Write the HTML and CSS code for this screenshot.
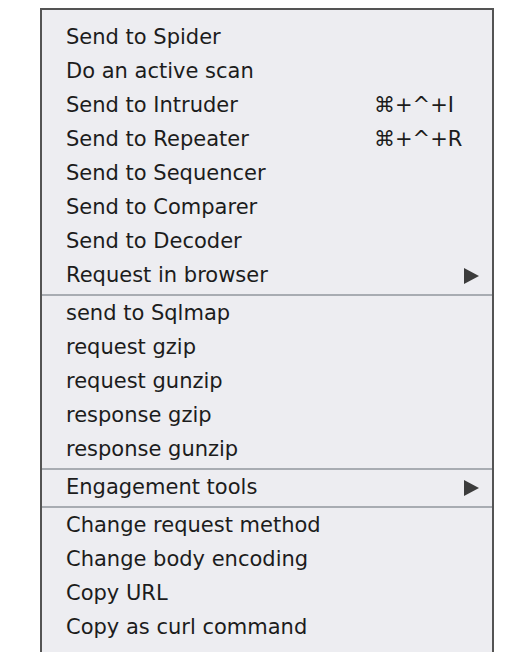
FILE: index.html
```html
<!DOCTYPE html>
<html>
<head>
<meta charset="utf-8">
<link rel="stylesheet" href="styles.css">
</head>
<body>
<div class="menu">
  <div class="item"><span class="label">Send to Spider</span></div>
  <div class="item"><span class="label">Do an active scan</span></div>
  <div class="item"><span class="label">Send to Intruder</span><span class="shortcut">⌘+^+I</span></div>
  <div class="item"><span class="label">Send to Repeater</span><span class="shortcut">⌘+^+R</span></div>
  <div class="item"><span class="label">Send to Sequencer</span></div>
  <div class="item"><span class="label">Send to Comparer</span></div>
  <div class="item"><span class="label">Send to Decoder</span></div>
  <div class="item"><span class="label">Request in browser</span><svg class="arrow" width="15" height="16" viewBox="0 0 15 16"><polygon points="0,0 15,8 0,16"/></svg></div>
  <div class="sep"></div>
  <div class="item"><span class="label">send to Sqlmap</span></div>
  <div class="item"><span class="label">request gzip</span></div>
  <div class="item"><span class="label">request gunzip</span></div>
  <div class="item"><span class="label">response gzip</span></div>
  <div class="item"><span class="label">response gunzip</span></div>
  <div class="sep"></div>
  <div class="item"><span class="label">Engagement tools</span><svg class="arrow" width="15" height="16" viewBox="0 0 15 16"><polygon points="0,0 15,8 0,16"/></svg></div>
  <div class="sep"></div>
  <div class="item"><span class="label">Change request method</span></div>
  <div class="item"><span class="label">Change body encoding</span></div>
  <div class="item"><span class="label">Copy URL</span></div>
  <div class="item"><span class="label">Copy as curl command</span></div>
  <div class="item"><span class="label">Copy to file</span></div>
</div>
</body>
</html>
```

FILE: styles.css
```css
html, body {
  margin: 0;
  padding: 0;
  background: #ffffff;
  overflow: hidden;
  height: 652px;
}

.menu {
  margin: 8px 0 0 40px;
  width: 450px;
  height: 700px;
  border: 2px solid #545454;
  background: #ededf1;
  padding-top: 11px;
  font-family: "DejaVu Sans", sans-serif;
  font-size: 21px;
  color: #1c1c1c;
}

.item {
  display: flex;
  align-items: center;
  height: 34px;
  padding-left: 24px;
  padding-right: 13px;
  white-space: nowrap;
}

.label {
  width: 308px;
  flex: none;
  position: relative;
  top: -1px;
}

.shortcut {
  flex: none;
  position: relative;
  top: -1px;
}

.arrow {
  margin-left: auto;
  fill: #3c3c3c;
}

.sep {
  height: 2px;
  margin: 1px 0;
  background: #a8acb2;
}
```
